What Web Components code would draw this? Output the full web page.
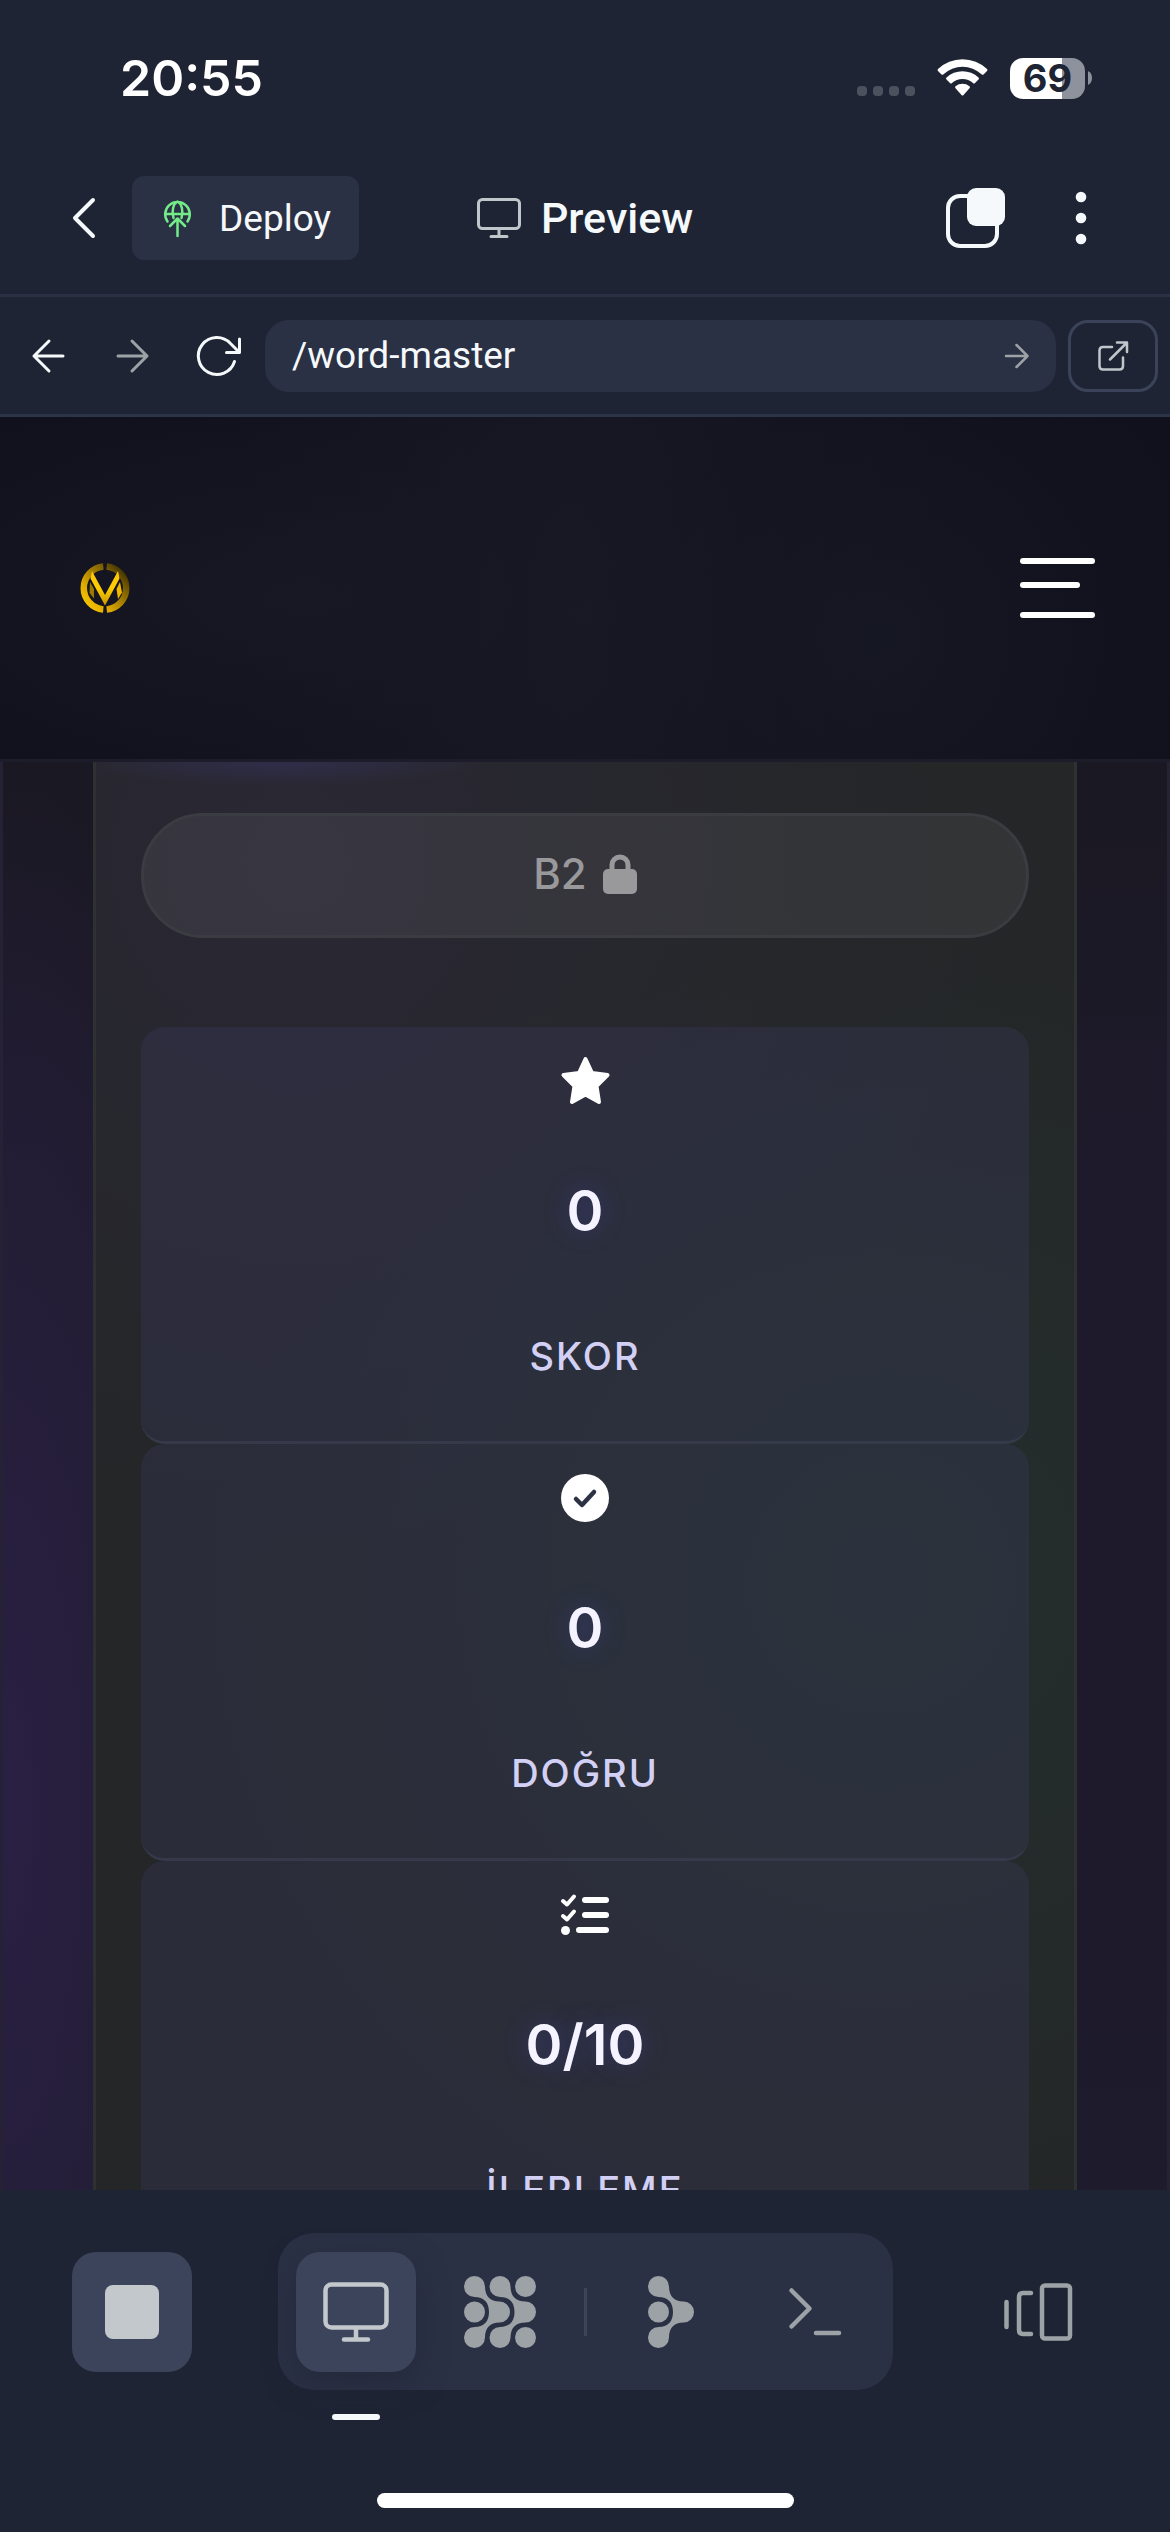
<!DOCTYPE html>
<html lang="tr">
<head>
<meta charset="utf-8">
<meta name="viewport" content="width=device-width, initial-scale=1">
<title>Preview</title>
<style>
html,body{margin:0;height:100%;background:#1e2433}
body{font-family:Inter,"Liberation Sans",sans-serif}
</style>
</head>
<body>
<preview-app></preview-app>
<script>
const reset = `*{box-sizing:border-box}svg{display:block;overflow:visible;flex:none}button{appearance:none;border:0;background:none;padding:0;margin:0;font:inherit;color:inherit;display:flex;align-items:center;justify-content:center}`;
function define(name, css, html) {
  const t = document.createElement('template');
  t.innerHTML = `<style>${reset}${css}</style>${html}`;
  customElements.define(name, class extends HTMLElement {
    constructor() {
      super();
      this.attachShadow({ mode: 'open' }).append(t.content.cloneNode(true));
    }
  });
}

define('status-bar', `
:host{display:flex;align-items:center;justify-content:space-between;height:156px;padding:0 78px 0 120px;color:#fff}
time{font-weight:600;font-size:50px;line-height:64px}
.right{display:flex;align-items:center;gap:22px}
.batt{display:flex;align-items:center;gap:3px}
.cell{width:75px;height:41px;border-radius:13px;background:linear-gradient(90deg,#fff 69%,#8e929c 69%);color:#1e2433;font-weight:700;font-size:38px;line-height:41px;text-align:center}
`, `<time>20:55</time>
<div class="right">
<svg width="58" height="38" viewBox="0 0 58 38" fill="#4c515e"><rect y="27" width="10" height="10" rx="4"/><rect x="16" y="27" width="10" height="10" rx="4"/><rect x="32" y="27" width="10" height="10" rx="4"/><rect x="48" y="27" width="10" height="10" rx="4"/></svg>
<svg width="51" height="38" viewBox="0 0 51 38" fill="#fff"><path d="M1 10Q0 11 1 12L4.500 15.400Q5.500 16.300 6.500 15.300A27.500 27.500 0 0 1 44.500 15.300Q45.500 16.300 46.500 15.400L50 12Q51 11 50 10A35.500 35.500 0 0 0 1 10Z"/><path d="M9.500 18.500Q8.500 19.500 9.500 20.500L13 24Q14 25 15 24A15.500 15.500 0 0 1 36 24Q37 25 38 24L41.500 20.500Q42.500 19.500 41.500 18.500A23.500 23.500 0 0 0 9.500 18.500Z"/><path d="M18.500 27.200Q17.500 28.200 18.500 29.300L24.500 36Q25.500 37 26.500 36L32.500 29.300Q33.500 28.200 32.500 27.200A11.500 11.500 0 0 0 18.500 27.200Z"/></svg>
<div class="batt"><div class="cell">69</div><svg width="4" height="14" viewBox="0 0 4 14"><path d="M0 0Q4 2 4 7T0 14Z" fill="#8e929c"/></svg></div>
</div>`);

define('app-header', `
:host{display:grid;grid-template-columns:1fr auto 1fr;align-items:center;height:141px;padding:0 73px 14px;border-bottom:3px solid #2b3145;color:#f5f9fc;font-family:Roboto,"Liberation Sans",sans-serif}
.left{display:flex;align-items:center;gap:37px}
.deploy{width:227px;height:84px;border-radius:12px;background:#2b3145;gap:28px;font-size:37px;padding-left:4px}
h1{margin:0;display:flex;align-items:center;gap:20px;font-size:43px;line-height:50px;font-weight:500}
.right{display:flex;align-items:center;justify-content:flex-end;gap:69px;padding-right:10px}
`, `<div class="left">
<button aria-label="Back"><svg width="22" height="42" viewBox="0 0 22 42" fill="none" stroke="#f5f9fc" stroke-width="4" stroke-linecap="round" stroke-linejoin="round"><path d="M20 3 2 21 20 39"/></svg></button>
<button class="deploy"><svg width="27" height="37" viewBox="0 0 27 37" fill="none" stroke="#72eb88" stroke-width="2.500" stroke-linecap="round" stroke-linejoin="round"><path d="M3.500 21.500A12.300 12.300 0 1 1 23.500 21.500M1.500 14H25.500M9.500 18C7.500 11 9 4 13.500 1.500 18 4 19.500 11 17.500 18M13.500 36V19M6 26 13.500 18.500 21 26"/></svg>Deploy</button>
</div>
<h1><svg width="44" height="40" viewBox="0 0 44 40" fill="none" stroke="#c1c6cb" stroke-width="3" stroke-linecap="round"><rect x="1.500" y="1.500" width="41" height="29" rx="4"/><path d="M22 31V38M14 38.500H30"/></svg>Preview</h1>
<div class="right">
<button aria-label="Tabs"><svg width="60" height="60" viewBox="0 0 60 60" fill="none"><rect x="2" y="8" width="49" height="50" rx="12" stroke="#f5f9fc" stroke-width="4"/><rect x="21" y="0" width="38" height="38" rx="9" fill="#f5f9fc"/></svg></button>
<button aria-label="More"><svg width="12" height="54" viewBox="0 0 12 54" fill="#f5f9fc"><circle cx="6" cy="6" r="5.300"/><circle cx="6" cy="27" r="5.300"/><circle cx="6" cy="48" r="5.300"/></svg></button>
</div>`);

define('url-bar', `
:host{display:flex;align-items:center;height:120px;padding:0 12px 0 32px;border-bottom:3px solid #2c3448}
.nav{display:flex;align-items:center;gap:53px;margin-right:24px}
.nav button:last-child{margin-left:-5px}
form{flex:1;display:flex;align-items:center;height:72px;border-radius:24px;background:#2b3145;padding:0 27px}
input{flex:1;min-width:0;border:0;background:none;color:#f5f9fc;padding:0;font:37px Roboto,"Liberation Sans",sans-serif;outline:0}
.ext{width:90px;height:72px;margin-left:12px;border:3px solid #3b435b;border-radius:20px;display:flex;align-items:center;justify-content:center}
svg{fill:none;stroke-linecap:round;stroke-linejoin:round}
`, `<div class="nav">
<button aria-label="Go back"><svg width="32" height="34" viewBox="0 0 32 34" stroke="#f5f9fc" stroke-width="3"><path d="M31 17H2M17 2 2 17 17 32"/></svg></button>
<button aria-label="Go forward"><svg width="32" height="34" viewBox="0 0 32 34" stroke="#9da2a6" stroke-width="3"><path d="M1 17H30M15 2 30 17 15 32"/></svg></button>
<button aria-label="Reload"><svg width="44" height="42" viewBox="0 0 44 42" stroke="#f5f9fc" stroke-width="3"><path d="M37.500 26.500A18.500 18.500 0 1 1 33.500 8.500L42 17M42.500 4V17.500H29.500"/></svg></button>
</div>
<form><input aria-label="Path" value="/word-master"><button type="button" aria-label="Go"><svg width="24" height="26" viewBox="0 0 24 26" stroke="#9da2a6" stroke-width="2.500"><path d="M1 13H22.500M11.500 2 22.500 13 11.500 24"/></svg></button></form>
<a class="ext" href="#" aria-label="Open in new tab"><svg width="30" height="30" viewBox="0 0 30 30" stroke="#c1c6cb" stroke-width="2.500"><path d="M14 6H5Q1.500 6 1.500 9.500V25Q1.500 28.500 5 28.500H21.500Q25 28.500 25 25V16.500M12 18.500 28.500 2M19 1.500H29V11"/></svg></a>`);

define('site-header', `
:host{display:flex;align-items:center;justify-content:space-between;height:345px;padding:0 75px 0 80px;border-bottom:3px solid #1d1c2a;background:radial-gradient(ellipse 480px 220px at 300px 180px,#181724,transparent),radial-gradient(circle 350px at 880px 220px,#151722,transparent),radial-gradient(ellipse 360px 700px at 590px 200px,#191825,transparent),#11101d}
.bars{flex-direction:column;align-items:flex-start;width:75px;height:60px;justify-content:space-between}
`, `<a href="#" aria-label="Home"><svg width="50" height="50" viewBox="0 0 50 50"><defs><linearGradient id="g" x1="0" y1="1" x2="1" y2="0"><stop offset="0" stop-color="#fc0"/><stop offset=".3" stop-color="#dca800"/><stop offset=".75" stop-color="#755a00"/><stop offset="1" stop-color="#2b2100"/></linearGradient><linearGradient id="v" x1="0" x2="0" y1="0" y2="1"><stop offset="0" stop-color="#ffc60a"/><stop offset=".5" stop-color="#fc0"/><stop offset="1" stop-color="#c89800"/></linearGradient></defs><path d="M23.300 3.500A21.600 21.600 0 0 0 23.300 46.500M26.700 3.500A21.600 21.600 0 0 1 26.700 46.500" fill="none" stroke="url(#g)" stroke-width="6.500"/><path d="M12 8 25 32 38 8 39.500 15.500 25 42.500 10.500 15.500Z" fill="url(#v)"/><path d="M10 19 14 26V35.500L9.500 30Z" fill="#9b7800"/><path d="M40 19 36.500 26 38 36 42 29.500Z" fill="#efb800"/></svg></a>
<button class="bars" aria-label="Menu"><svg width="75" height="60" viewBox="0 0 75 60" fill="#fff"><rect width="75" height="6" rx="3"/><rect y="24" width="60" height="6" rx="3"/><rect y="54" width="75" height="6" rx="3"/></svg></button>`);

define('stat-card', `
:host{display:flex;flex-direction:column;align-items:center;height:417px;border-radius:24px;border-bottom:3px solid #363949;background:rgba(60,60,100,.30);padding-top:27px}
.icon{height:54px;display:flex;align-items:center;color:#fff}
.value{margin-top:55px;height:96px;line-height:96px;font-size:56px;font-weight:600;color:#f5f3ff;text-shadow:0 0 24px rgba(70,70,170,.45)}
.label{margin-top:58px;height:78px;line-height:78px;font-size:38px;font-weight:500;letter-spacing:2px;color:#d3d0f6}
`, `<div class="icon"><slot name="icon"></slot></div><div class="value"><slot name="value"></slot></div><div class="label"><slot></slot></div>`);

define('word-page', `
:host{display:flex;justify-content:center;flex:1;min-height:0;overflow:hidden;padding:0 90px;border:solid #252235;border-width:0 3px;background:radial-gradient(ellipse 260px 1050px at 0 1050px,#2a2044,rgba(40,32,64,.6) 50%,transparent),linear-gradient(180deg,#1a1822,#1e1a2b 400px,#1e1a2b 1200px,#1d1b2c)}
main{flex:1;padding:51px 45px 0;border:solid #2e3032;border-width:0 3px;background:radial-gradient(ellipse 200px 24px at 185px 0,#302d4a,transparent),radial-gradient(circle 680px at 785px 820px,rgba(36,52,48,.65),transparent),radial-gradient(circle 700px at 200px 100px,rgba(43,40,55,.8),transparent),#242627}
.level{width:100%;height:125px;border:3px solid #3b3c41;border-radius:62px;background:rgba(255,255,255,.065);color:#99999c;font:500 42px/50px Inter,sans-serif;gap:16px;margin-bottom:89px;padding-bottom:3px}
`, `<main>
<button class="level" disabled>B2 <svg width="34" height="40" viewBox="0 0 34 40"><path d="M9 18V11A8 8 0 0 1 25 11V18" fill="none" stroke="#99999c" stroke-width="5"/><rect y="15" width="34" height="25" rx="5" fill="#99999c"/></svg></button>
<stat-card><svg slot="icon" width="51" height="50" viewBox="0 0 51 50"><path d="M25.500 3 32 17 47.500 19 36.500 30 39 46 25.500 38.500 12 46 14.500 30 3.500 19 19 17Z" fill="#fff" stroke="#fff" stroke-width="4" stroke-linejoin="round"/></svg><span slot="value">0</span>SKOR</stat-card>
<stat-card><svg slot="icon" width="48" height="48" viewBox="0 0 48 48"><circle cx="24" cy="24" r="24" fill="#fff"/><path d="M15 25 21 31 33 18" fill="none" stroke="#2c3143" stroke-width="4.500" stroke-linecap="round" stroke-linejoin="round"/></svg><span slot="value">0</span>DOĞRU</stat-card>
<stat-card><svg slot="icon" width="48" height="42" viewBox="0 0 48 42" fill="#fff"><path d="M2 7 6 10.500 13 2.500M2 22 6 25.500 13 17.500" fill="none" stroke="#fff" stroke-width="4" stroke-linecap="round" stroke-linejoin="round"/><rect x="21" y="3" width="27" height="6" rx="3"/><rect x="21" y="18" width="27" height="6" rx="3"/><rect x="15" y="33" width="33" height="6" rx="3"/><circle cx="4.500" cy="36.500" r="4.500"/></svg><span slot="value">0/10</span>İLERLEME</stat-card>
</main>`);

define('bottom-dock', `
:host{display:flex;flex-direction:column;align-items:center;height:342px;background:#1e2433}
.row{align-self:stretch;display:flex;align-items:center;justify-content:space-between;height:157px;margin-top:43px;padding:0 72px}
.stop,.group button{width:120px;height:120px;border-radius:24px}
.stop{background:#3c445c}
.group{display:flex;align-items:center;height:157px;padding:0 18px;border-radius:36px;background:#2b3145;gap:24px}
.group .on{position:relative;background:#3c445c;box-shadow:0 12px 30px rgba(30,36,51,.55)}
.on::after{content:"";position:absolute;left:36px;top:162px;width:48px;height:6px;border-radius:3px;background:#f5f9fc}
hr{width:3px;height:48px;border:0;margin:0;background:#3c445c}
.resp{width:120px;height:120px}
.home{width:417px;height:15px;border-radius:8px;background:#fff;margin-top:103px}
`, `<div class="row">
<button class="stop" aria-label="Stop"><svg width="54" height="54" viewBox="0 0 54 54"><rect width="54" height="54" rx="8" fill="#c2c8cc"/></svg></button>
<nav class="group">
<button class="on" aria-label="Preview"><svg width="66" height="60" viewBox="0 0 66 60" fill="none" stroke="#c2c8cc" stroke-width="4.500" stroke-linecap="round"><rect x="2.500" y="2.500" width="61" height="43" rx="6"/><path d="M33 46V57M21 57.500H45"/></svg></button>
<button aria-label="Agent"><svg width="72" height="72" viewBox="0 0 72 72" fill="#9da2a6"><path d="M10.500 0A10.500 10.500 0 0 1 21 10.500C21 20 26 25.500 35.500 25.500A10.500 10.500 0 0 1 35.500 46.500C26 46.500 21 52 21 61.500A10.500 10.500 0 1 1 10.500 51C20 51 25 45.500 25 36S20 21 10.500 21A10.500 10.500 0 0 1 10.500 0Z"/><path d="M36 0A10.500 10.500 0 0 1 46.500 10.500C46.500 20 51.500 25.500 61.500 25.500A10.500 10.500 0 0 1 61.500 46.500C51.500 46.500 46.500 52 46.500 61.500A10.500 10.500 0 1 1 36 51C45.500 51 50.500 45.500 50.500 36S45.500 21 36 21A10.500 10.500 0 0 1 36 0Z"/><circle cx="61.500" cy="10.500" r="10.500"/><circle cx="61.500" cy="61.500" r="10.500"/><circle cx="10.500" cy="36" r="10.500"/></svg></button>
<hr>
<button aria-label="Workflow"><svg width="46" height="72" viewBox="0 0 46 72" fill="#9da2a6"><path d="M10.500 0A10.500 10.500 0 0 1 21 10.500C21 20 26 25.500 35.500 25.500A10.500 10.500 0 0 1 35.500 46.500C26 46.500 21 52 21 61.500A10.500 10.500 0 1 1 10.500 51C20 51 25 45.500 25 36S20 21 10.500 21A10.500 10.500 0 0 1 10.500 0Z"/><circle cx="10.500" cy="36" r="10.500"/></svg></button>
<button aria-label="Shell"><svg width="52" height="48" viewBox="0 0 52 48" fill="none" stroke="#9da2a6" stroke-width="4.500" stroke-linecap="round" stroke-linejoin="round"><path d="M2.500 2.500 20.500 20.500 2.500 38.500M27 45H50"/></svg></button>
</nav>
<button class="resp" aria-label="Panels"><svg width="68" height="58" viewBox="0 0 68 58" fill="none" stroke="#9da2a6" stroke-width="4.500" stroke-linecap="round" stroke-linejoin="round"><path d="M2.500 19V44M27 10H19Q15 10 15 14V47Q15 51 19 51H27"/><rect x="38" y="2.500" width="28" height="53" rx="3"/></svg></button>
</div>
<div class="home"></div>`);

define('preview-app', `
:host{display:flex;flex-direction:column;height:100vh;overflow:hidden}
status-bar,app-header,url-bar,site-header,bottom-dock{flex:none}
`, `<status-bar></status-bar><app-header></app-header><url-bar></url-bar><site-header></site-header><word-page></word-page><bottom-dock></bottom-dock>`);
</script>
</body>
</html>
